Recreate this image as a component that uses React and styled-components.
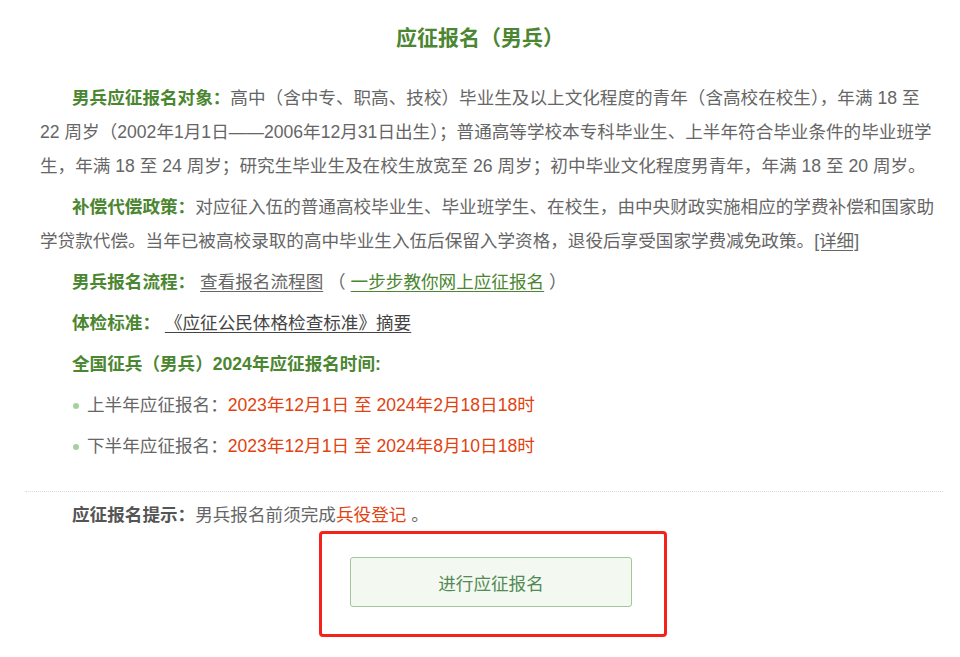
import React from "react";
import styled, { createGlobalStyle } from "styled-components";

const GlobalStyle = createGlobalStyle`
  html, body { margin: 0; padding: 0; background: #fff; }
  body {
    font-family: "Liberation Sans", "Noto Sans CJK SC", sans-serif;
    color: #666;
  }
`;

const GREEN = "#4b8631";
const RED = "#e2420f";

const Page = styled.div`
  width: 960px;
  box-sizing: border-box;
  padding: 23px 17px 0 25px;
`;

const Title = styled.h1`
  margin: 0 8px 0 0;
  text-align: center;
  font-size: 21px;
  line-height: 30px;
  font-weight: bold;
  color: ${GREEN};
`;

const Content = styled.div`
  display: flex;
  flex-direction: column;
  gap: 7px;
  padding: 28px 0 0 15px;
  font-size: 17.6px;
  line-height: 34px;
  color: #666;
`;

const Para = styled.p`
  margin: 0;
  text-indent: 32px;
  white-space: nowrap;
`;

const Row = styled.div`
  padding-left: 32px;
  white-space: nowrap;
`;

const Label = styled.strong`
  color: ${(p) => (p.$tone === "gray" ? "#555" : GREEN)};
  font-weight: bold;
`;

const Link = styled.a`
  color: ${(p) => p.$color || "#666"};
  text-decoration: underline;
  text-underline-offset: 3px;
  cursor: pointer;
`;

const Red = styled.span`
  color: ${RED};
`;

const BulletRow = styled.div`
  display: flex;
  align-items: center;
  padding-left: 32px;
  white-space: nowrap;
  &::before {
    content: "";
    width: 6px;
    height: 6px;
    border-radius: 50%;
    background: #a6d09e;
    margin: 2px 8px 0 1px;
    flex: none;
  }
`;

const Separator = styled.hr`
  margin: 28px 0 0;
  border: none;
  border-top: 1px dotted #dcdcdc;
  height: 0;
`;

const Tip = styled.div`
  margin-top: 6px;
  padding-left: 47px;
  font-size: 17.6px;
  line-height: 34px;
  color: #666;
  white-space: nowrap;
`;

const ActionArea = styled.div`
  display: flex;
  justify-content: center;
  padding-left: 15px;
`;

const Highlight = styled.div`
  margin: -1px 0 0 3px;
  border: 3px solid #f5221b;
  border-radius: 4px;
  padding: 23px 32px 27px 28px;
`;

const ApplyButton = styled.button`
  display: flex;
  align-items: center;
  justify-content: center;
  width: 282px;
  height: 50px;
  box-sizing: border-box;
  border: 1px solid #a3c79c;
  border-radius: 3px;
  background: #f3f8f0;
  color: #528a55;
  font-family: "Liberation Sans", "Noto Sans CJK SC", sans-serif;
  font-size: 17.6px;
  cursor: pointer;
`;

export default function App() {
  return (
    <>
      <GlobalStyle />
      <Page>
        <Title>应征报名（男兵）</Title>
        <Content>
          <Para>
            <Label>男兵应征报名对象：</Label>高中（含中专、职高、技校）毕业生及以上文化程度的青年（含高校在校生），年满 18 至
            <br />
            22 周岁（2002年1月1日——2006年12月31日出生）；普通高等学校本专科毕业生、上半年符合毕业条件的毕业班学
            <br />
            生，年满 18 至 24 周岁；研究生毕业生及在校生放宽至 26 周岁；初中毕业文化程度男青年，年满 18 至 20 周岁。
          </Para>
          <Para>
            <Label>补偿代偿政策：</Label>对应征入伍的普通高校毕业生、毕业班学生、在校生，由中央财政实施相应的学费补偿和国家助
            <br />
            学贷款代偿。当年已被高校录取的高中毕业生入伍后保留入学资格，退役后享受国家学费减免政策。<Link>[详细]</Link>
          </Para>
          <Row>
            <Label>男兵报名流程：</Label> <Link>查看报名流程图</Link> （ <Link $color={GREEN}>一步步教你网上应征报名</Link> ）
          </Row>
          <Row>
            <Label>体检标准：</Label> <Link $color="#444">《应征公民体格检查标准》摘要</Link>
          </Row>
          <Row>
            <Label>全国征兵（男兵）2024年应征报名时间:</Label>
          </Row>
          <BulletRow>
            上半年应征报名：<Red>2023年12月1日 至 2024年2月18日18时</Red>
          </BulletRow>
          <BulletRow>
            下半年应征报名：<Red>2023年12月1日 至 2024年8月10日18时</Red>
          </BulletRow>
        </Content>
        <Separator />
        <Tip>
          <Label $tone="gray">应征报名提示：</Label>男兵报名前须完成<Red>兵役登记</Red> 。
        </Tip>
        <ActionArea>
          <Highlight>
            <ApplyButton type="button">进行应征报名</ApplyButton>
          </Highlight>
        </ActionArea>
      </Page>
    </>
  );
}
